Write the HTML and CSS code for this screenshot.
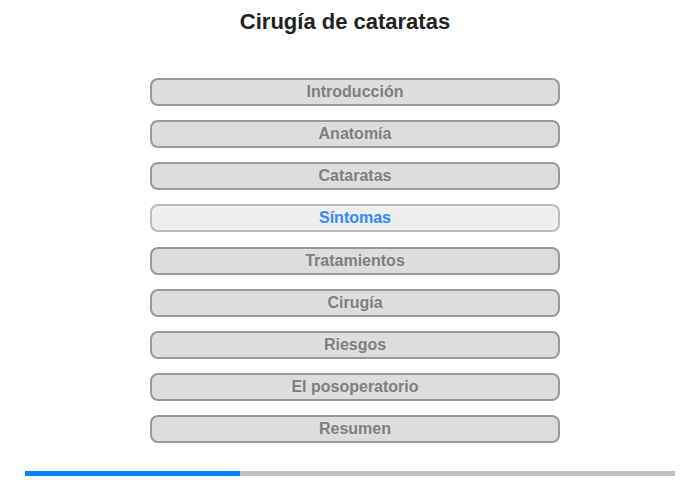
FILE: index.html
```html
<!DOCTYPE html>
<html lang="es">
<head>
    <meta charset="UTF-8">
    <title>Cirugía de cataratas</title>
    <link rel="stylesheet" href="styles.css">
</head>
<body>
    <div class="page">
        <h1 class="title">Cirugía de cataratas</h1>

        <div class="menu">
            <div class="menu-item">Introducción</div>
            <div class="menu-item">Anatomía</div>
            <div class="menu-item">Cataratas</div>
            <div class="menu-item active">Síntomas</div>
            <div class="menu-item">Tratamientos</div>
            <div class="menu-item">Cirugía</div>
            <div class="menu-item">Riesgos</div>
            <div class="menu-item">El posoperatorio</div>
            <div class="menu-item">Resumen</div>
        </div>

        <div class="progress">
            <div class="progress-fill" style="width: 33%"></div>
        </div>
    </div>
</body>
</html>
```

FILE: styles.css
```css
body {
    margin: 0;
    font-family: "Liberation Sans", Arial, sans-serif;
    background-color: #ffffff;
}
.page {
    width: 700px;
    height: 480px;
}
.title {
    margin: 0;
    padding-top: 9px;
    padding-right: 10px;
    font-size: 22px;
    line-height: 26px;
    text-align: center;
    color: #222222;
}
.menu {
    width: 410px;
    margin: 43px 0 0 150px;
    display: flex;
    flex-direction: column;
    gap: 14.125px;
}
.menu-item {
    height: 24px;
    line-height: 24px;
    border: 2px solid #999999;
    border-radius: 8px;
    background-color: #dddddd;
    color: #808080;
    font-size: 16px;
    font-weight: bold;
    text-align: center;
}
.menu-item.active {
    background-color: #eeeeee;
    border-color: #bbbbbb;
    color: #3388ff;
}
.progress {
    width: 650px;
    height: 5px;
    margin: 28px 0 0 25px;
    background-color: #c0c0c0;
}
.progress-fill {
    height: 100%;
    background-color: #0080ff;
}
```
